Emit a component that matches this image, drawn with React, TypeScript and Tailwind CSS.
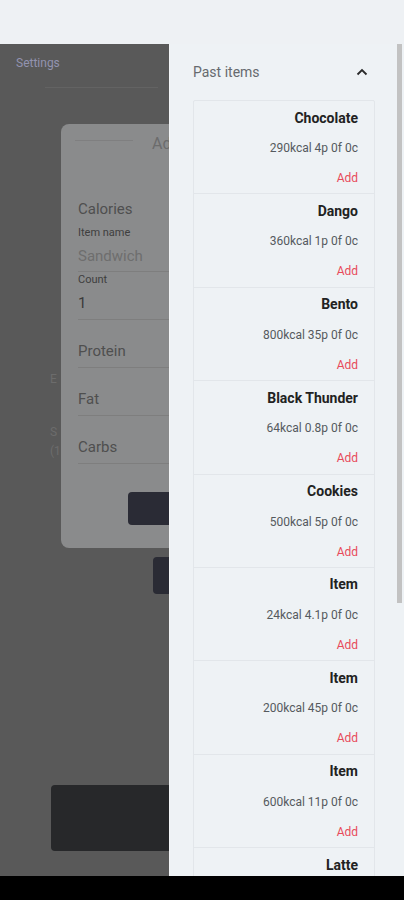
import React from "react";

const items = [
  { name: "Chocolate", macros: "290kcal 4p 0f 0c" },
  { name: "Dango", macros: "360kcal 1p 0f 0c" },
  { name: "Bento", macros: "800kcal 35p 0f 0c" },
  { name: "Black Thunder", macros: "64kcal 0.8p 0f 0c" },
  { name: "Cookies", macros: "500kcal 5p 0f 0c" },
  { name: "Item", macros: "24kcal 4.1p 0f 0c" },
  { name: "Item", macros: "200kcal 45p 0f 0c" },
  { name: "Item", macros: "600kcal 11p 0f 0c" },
  { name: "Latte", macros: "150kcal 8p 0f 0c" },
];

function Field({ label }: { label: string }) {
  return (
    <div className="h-[48px] flex items-end pb-[6px] border-b border-[#7e7e7e] text-[15px] leading-5 text-[#4f4f4f]">
      {label}
    </div>
  );
}

export default function App() {
  return (
    <div
      className="w-[404px] h-[900px] flex flex-col overflow-hidden bg-black"
      style={{ fontFamily: "Roboto, 'Liberation Sans', sans-serif" }}
    >
      <div className="h-[44px] bg-[#eef1f4] shrink-0" />
      <div className="h-[832px] flex shrink-0">
        {/* dimmed page */}
        <div className="w-[169px] relative overflow-hidden bg-[#595959] shrink-0">
          <div className="pl-4 pt-[11px] text-[12px] leading-4 text-[#9393b0]">Settings</div>
          <div className="ml-[45px] mt-[16px] w-[113px] h-px bg-[#636363]" />
          <div className="pl-[50px] mt-[283px] text-[12px] leading-4 text-[#6c6c6c]">E</div>
          <div className="pl-[50px] mt-[37px] text-[12px] leading-4 text-[#6c6c6c]">S</div>
          <div className="pl-[50px] mt-[3px] text-[12px] leading-4 text-[#6c6c6c]">(1</div>
          <div className="ml-[153px] mt-[98px] w-[40px] h-[37px] rounded-[4px] bg-[#2a2b34]" />
          <div className="ml-[51px] mt-[191px] w-[160px] h-[66px] rounded-[4px] bg-[#27282a]" />

          {/* modal */}
          <div className="absolute left-[61px] top-[80px] w-[220px] h-[424px] rounded-[8px] bg-[#8a8b8c] pl-[17px] pr-4">
            <div className="h-[40px] flex items-center">
              <div className="w-[58px] h-px bg-[#7f7f80] mt-[-8px] ml-[-3px]" />
              <div className="ml-[19px] text-[16px] text-[#6c6c6c]">Ad</div>
            </div>
            <div className="mt-[33px] h-[24px] flex items-center text-[15px] text-[#4f4f4f]">Calories</div>
            <div className="mt-[4px] h-[16px] flex items-center text-[11px] text-[#3e3e3e]">Item name</div>
            <div className="h-[31px] flex items-center text-[15px] text-[#6e6e6e] border-b border-[#7e7e7e]">
              Sandwich
            </div>
            <div className="h-[16px] flex items-center text-[11px] text-[#3e3e3e]">Count</div>
            <div className="h-[32px] flex items-center text-[15px] text-[#3a3a3a] border-b border-[#7e7e7e]">
              1
            </div>
            <Field label="Protein" />
            <Field label="Fat" />
            <Field label="Carbs" />
            <div className="ml-[50px] mt-[28px] w-[80px] h-[33px] rounded-[4px] bg-[#2a2b35]" />
          </div>
        </div>

        {/* drawer */}
        <div className="flex-1 relative bg-[#eef2f5] overflow-hidden border-l border-[#f4f6f8]">
          <div className="absolute right-[2px] top-0 w-[5px] h-[559px] bg-[#c2c2c2]" />
          <div className="pl-[23px]">
            <div className="h-[56px] pr-[36px] flex items-center justify-between">
              <span className="text-[14px] text-[#666a6e]">Past items</span>
              <svg width="12" height="8" viewBox="0 0 12 8">
                <path d="M1.5 6.5 L6 2 L10.5 6.5" fill="none" stroke="#2a2a2a" strokeWidth="1.8" />
              </svg>
            </div>
            <div className="w-[182px] border border-[#e2e6ea] rounded-[2px]">
              {items.map((it, i) => (
                <div
                  key={i}
                  className="h-[93.375px] border-b border-[#e2e6ea] pr-4 pt-[2px] flex flex-col items-end"
                >
                  <div className="h-[30px] flex items-center text-[14px] font-bold text-[#222222]">{it.name}</div>
                  <div className="h-[30px] flex items-center text-[12px] text-[#555a5e]">{it.macros}</div>
                  <div className="h-[30px] flex items-center text-[12px] text-[#e84a5a]">Add</div>
                </div>
              ))}
            </div>
          </div>
        </div>
      </div>
      <div className="h-[24px] bg-black shrink-0" />
    </div>
  );
}
